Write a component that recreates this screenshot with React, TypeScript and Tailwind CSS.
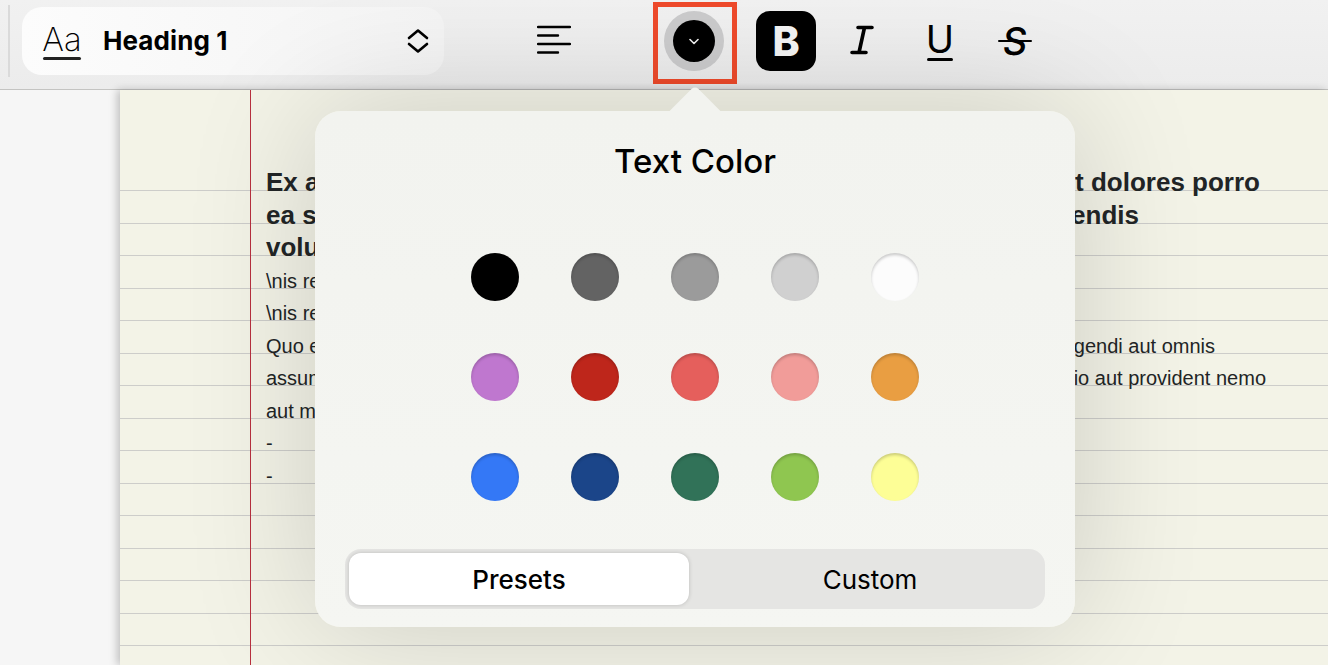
import React from "react";

const SANS = "font-['Inter','Noto_Sans',sans-serif]";

const colors = [
  "#000000", "#636363", "#9b9b9b", "#d0d0d0", "#fcfcfc",
  "#bf77cf", "#be261b", "#e55f5c", "#f19c99", "#e99e42",
  "#3478f6", "#1b4589", "#317258", "#8fc650", "#fdfe96",
];

function Row({ left, right, mr }: { left: string; right?: string; mr?: number }) {
  return (
    <div className="flex justify-between whitespace-nowrap">
      <span>{left}</span>
      {right ? <span style={{ marginRight: mr }}>{right}</span> : null}
    </div>
  );
}

export default function App() {
  return (
    <div className={`relative flex h-[665px] w-[1328px] flex-col overflow-hidden bg-[#f6f6f6] ${SANS}`}>
      {/* Toolbar */}
      <header className="flex h-[90px] shrink-0 items-start border-b border-[#c4c4c2] bg-gradient-to-b from-[#f1f1f1] to-[#ececec] pl-[8px] text-black">
        <div className="mt-[5px] h-[72px] w-[2px] bg-[#dadada]" />
        <div className="ml-[12px] mt-[7px] flex h-[68px] w-[422px] items-center rounded-[20px] bg-gradient-to-r from-[#fcfcfc] to-[#f4f4f4] pl-[21px] pr-[14px]">
          <div className="flex w-[38px] flex-col items-center">
            <span className="text-[33px] font-[250] leading-[34px]">Aa</span>
            <span className="mt-[1px] h-[3px] w-[38px] rounded-full bg-[#222]" />
          </div>
          <span className="ml-[22px] text-[26px] font-bold leading-none tracking-[0.1px]">Heading 1</span>
          <svg className="ml-auto" width="24" height="26" viewBox="0 0 24 26" fill="none" stroke="black" strokeWidth="2.6" strokeLinecap="round" strokeLinejoin="round">
            <path d="M3 10 L12 2.5 L21 10" />
            <path d="M3 16 L12 23.5 L21 16" />
          </svg>
        </div>
        <svg className="ml-[93px] mt-[25px]" width="34" height="30" viewBox="0 0 34 30" stroke="black" strokeWidth="2.4" strokeLinecap="round">
          <path d="M1 2 H33 M1 10.5 H21 M1 19 H33 M1 27.5 H21" />
        </svg>
        <div className="relative ml-[93px] mt-[11px] flex h-[60px] w-[60px] items-center justify-center rounded-full bg-[#cbcbcc]">
          <div className="flex h-[42px] w-[42px] items-center justify-center rounded-full bg-black">
            <svg width="10" height="7" viewBox="0 0 10 7" fill="none" stroke="#f0f0f0" strokeWidth="1.6" strokeLinecap="round" strokeLinejoin="round">
              <path d="M1 1.5 L5 5.5 L9 1.5" />
            </svg>
          </div>
          <div className="absolute bottom-[-13px] left-[-11px] right-[-13px] top-[-9px] border-[5px] border-[#ee4a2b]" />
        </div>
        <div className="ml-[32px] mt-[11px] flex h-[60px] w-[60px] items-center justify-center rounded-[14px] bg-black text-[41px] font-extrabold leading-none text-[#f4f4f4]">B</div>
        <svg className="ml-[34px] mt-[25px]" width="24" height="30" viewBox="0 0 24 30" fill="none" stroke="black" strokeWidth="3.6" strokeLinecap="round">
          <path d="M8 2.5 H22 M2 27.5 H16 M14.5 2.5 L9 27.5" />
        </svg>
        <div className="ml-[53px] mt-[11px] flex h-[60px] w-[26px] flex-col items-center justify-center">
          <span className="text-[38px] font-normal leading-[36px]">U</span>
          <span className="mt-[1px] h-[3px] w-[26px] rounded-full bg-black" />
        </div>
        <div className="relative ml-[45px] mt-[11px] flex h-[60px] w-[34px] items-center justify-center text-[38px] font-medium leading-none">
          <span className="-skew-x-6">S</span>
          <span className="absolute left-0 right-0 top-[29px] h-[2px] rounded-full bg-black" />
        </div>
      </header>

      {/* Body */}
      <main className="flex min-h-0 flex-1">
        <aside className="w-[120px] shrink-0" />
        <section className="relative flex-1 bg-[#f3f3e7] pt-[69px] shadow-[-3px_0_8px_rgba(0,0,0,0.22)]">
          <div className="h-full bg-[repeating-linear-gradient(to_bottom,transparent_0,transparent_31px,#cdcdca_31.5px,#cdcdca_32px,transparent_32.5px)] pl-[146px] pt-[7px] font-['Liberation_Sans',Arial,sans-serif] text-[#222526]">
            <div className="text-[26px] font-bold leading-[32.5px]">
              <Row left="Ex aut quia" right="t dolores porro" mr={68} />
              <Row left="ea sint" right="endis" mr={189} />
              <Row left="voluptatem" />
            </div>
            <div className="mt-px text-[20px] leading-[32.5px]">
              <Row left="\nis recusandae" />
              <Row left="\nis rerum" />
              <Row left="Quo et" right="gendi aut omnis" mr={113} />
              <Row left="assumenda" right="io aut provident nemo" mr={62} />
              <Row left="aut minima" />
              <Row left="-" />
              <Row left="-" />
            </div>
          </div>
          <div className="absolute bottom-0 left-[130px] top-0 w-px bg-[#b8303f]" />
        </section>
      </main>

      {/* Popover */}
      <div className="absolute left-[315px] top-[111px] flex h-[516px] w-[760px] flex-col rounded-[26px] bg-gradient-to-b from-[#f2f3ef] to-[#f5f6f2] px-[30px] shadow-[0_0_130px_rgba(0,0,0,0.16)]">
        <div className="absolute left-1/2 top-[-18px] h-[36px] w-[36px] -translate-x-1/2 rotate-45 rounded-tl-[5px] bg-[#f2f3ef]" />
        <h2 className="relative mt-[30px] text-center text-[33px] font-medium leading-[40px] text-black">Text Color</h2>
        <div className="mt-[72px] grid grid-cols-5 gap-x-[52px] gap-y-[52px] self-center">
          {colors.map((c) => (
            <div
              key={c}
              className="h-[48px] w-[48px] rounded-full shadow-[inset_0_2px_3px_rgba(0,0,0,0.2)]"
              style={{ backgroundColor: c }}
            />
          ))}
        </div>
        <div className="mt-[48px] flex h-[60px] rounded-[16px] bg-[#e5e5e3] p-[4px] text-[26px] text-black">
          <div className="flex w-[340px] items-center justify-center rounded-[12px] bg-white font-medium shadow-[0_0_4px_rgba(0,0,0,0.18)]">Presets</div>
          <div className="flex flex-1 items-center justify-center pl-[10px]">Custom</div>
        </div>
      </div>
    </div>
  );
}
